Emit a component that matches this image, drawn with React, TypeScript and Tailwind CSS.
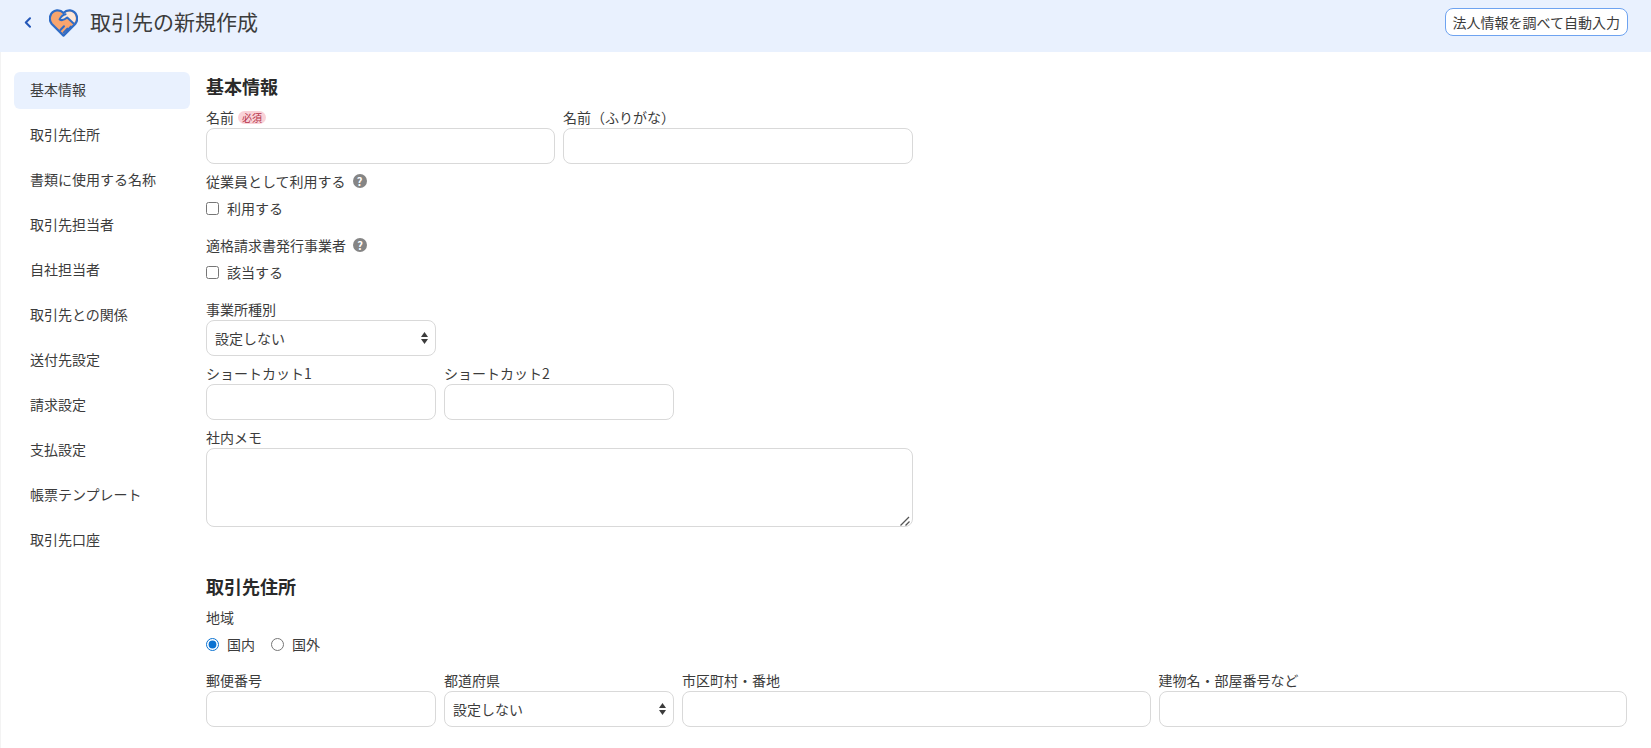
const sections = [
  "基本情報",
  "取引先住所",
  "書類に使用する名称",
  "取引先担当者",
  "自社担当者",
  "取引先との関係",
  "送付先設定",
  "請求設定",
  "支払設定",
  "帳票テンプレート",
  "取引先口座",
];

const inputClass =
  "block h-9 w-full rounded-lg border border-[#d9d9d9] bg-white px-2 text-sm outline-none";

function Logo() {
  return (
    <svg width="29" height="28" viewBox="0 0 29 28" fill="none">
      <path
        d="M14.5 26.6 L2.8 15 C-1 10.6 1 2.2 7.8 1.4 C10.8 1.1 13 2.3 14.5 4 C16 2.3 18.2 1.1 21.2 1.4 C28 2.2 30 10.6 26.2 15 Z"
        fill="#f8a56e"
      />
      <path
        d="M10 10.5 C12 5 16.5 2.4 21 2.4 C25.5 2.8 27.8 7.5 26.4 12 L24.4 14.5 L18.4 8.8 L13.5 11.6 Z"
        fill="#fde6d6"
      />
      <path
        d="M24.6 14.6 L18.2 8.6 C15.8 10.6 13.4 12.4 10.6 10.4 C12.2 7 14 5.6 16.6 5.2"
        stroke="#2f6cc6"
        strokeWidth="2"
        strokeLinecap="round"
        strokeLinejoin="round"
      />
      <path
        d="M11.4 21 L15 17.2 M14.6 23.6 L18.4 19.6 M18 21.8 L21.8 17.6"
        stroke="#2f6cc6"
        strokeWidth="2"
        strokeLinecap="round"
      />
      <path
        d="M14.5 26.6 L2.8 15 C-1 10.6 1 2.2 7.8 1.4 C10.8 1.1 13 2.3 14.5 4 C16 2.3 18.2 1.1 21.2 1.4 C28 2.2 30 10.6 26.2 15 Z"
        stroke="#2f6cc6"
        strokeWidth="2.2"
        strokeLinejoin="round"
      />
    </svg>
  );
}

function HelpIcon() {
  return (
    <span className="ml-[7px] flex h-[14px] w-[14px] items-center justify-center rounded-full bg-[#858585] text-[11px] leading-none font-bold text-white">
      ?
    </span>
  );
}

function Label({ children }: { children: React.ReactNode }) {
  return <div className="flex h-[22px] items-center text-sm text-[#3c3c3c]">{children}</div>;
}

function Field({
  label,
  className,
  children,
}: {
  label: React.ReactNode;
  className?: string;
  children?: React.ReactNode;
}) {
  return (
    <div className={className}>
      <Label>{label}</Label>
      {children ?? <input type="text" className={inputClass} />}
    </div>
  );
}

function SelectBox() {
  return (
    <div className="relative">
      <select className="block h-9 w-full appearance-none rounded-lg border border-[#d9d9d9] bg-white px-2 text-sm text-[#3c3c3c] outline-none">
        <option>設定しない</option>
      </select>
      <svg
        className="pointer-events-none absolute top-[12px] right-[8px]"
        width="7"
        height="12"
        viewBox="0 0 7 12"
        fill="#3c3c3c"
      >
        <path d="M3.5 0 L7 5 H0 Z" />
        <path d="M3.5 12 L7 7 H0 Z" />
      </svg>
    </div>
  );
}

export default function App() {
  return (
    <div
      className="h-[748px] overflow-hidden bg-white text-[#3c3c3c]"
      style={{ fontFamily: '"Noto Sans CJK JP", "Noto Sans", sans-serif' }}
    >
      <header className="flex h-[52px] items-start justify-between bg-[#e9f1fe] pt-2 pr-[23px] pl-[24px]">
        <div className="flex h-7 items-center">
          <svg width="8" height="11" viewBox="0 0 8 11" fill="none">
            <path
              d="M6 1.2 L1.8 5.5 L6 9.8"
              stroke="#2457b8"
              strokeWidth="2"
              strokeLinecap="round"
              strokeLinejoin="round"
            />
          </svg>
          <div className="mt-[2px] ml-[17px]">
            <Logo />
          </div>
          <h1 className="ml-[12px] text-[21px] font-normal text-[#3c3c3c]">取引先の新規作成</h1>
        </div>
        <button className="h-7 rounded-lg border border-[#6ea3f0] bg-white px-[7px] text-sm text-[#3c3c3c]">
          法人情報を調べて自動入力
        </button>
      </header>

      <div className="flex h-[696px] border-l border-[#f3f3f3]">
        <nav className="w-[205px] shrink-0 pt-5 pr-4 pl-[13px]">
          {sections.map((s, i) => (
            <div
              key={s}
              className={`mb-2 flex h-[37px] items-center rounded-md pb-1 pl-4 text-sm ${
                i === 0 ? "bg-[#e9f1fe]" : ""
              }`}
            >
              {s}
            </div>
          ))}
        </nav>

        <main className="flex-1 pt-[21px] pr-6">
          <h2 className="text-lg leading-[26px] font-bold text-[#2a2a2a]">基本情報</h2>
          <div className="w-[707px]">
            <div className="mt-[7px] grid grid-cols-[349px_350px] gap-2">
              <Field
                label={
                  <>
                    名前
                    <span className="ml-1 rounded-full bg-[#f9d2d8] px-1 text-[10px] leading-[13px] text-[#b5334a]">
                      必須
                    </span>
                  </>
                }
              />
              <Field label="名前（ふりがな）" />
            </div>
            <div className="mt-[6px]">
              <Label>
                従業員として利用する
                <HelpIcon />
              </Label>
              <label className="mt-1 flex h-6 items-center text-sm">
                <input type="checkbox" className="mr-2 h-[13px] w-[13px]" />
                利用する
              </label>
            </div>
            <div className="mt-[14px]">
              <Label>
                適格請求書発行事業者
                <HelpIcon />
              </Label>
              <label className="mt-1 flex h-6 items-center text-sm">
                <input type="checkbox" className="mr-2 h-[13px] w-[13px]" />
                該当する
              </label>
            </div>
            <Field label="事業所種別" className="mt-[14px] w-[230px]">
              <SelectBox />
            </Field>
            <div className="mt-[6px] flex gap-2">
              <Field label="ショートカット1" className="w-[230px]" />
              <Field label="ショートカット2" className="w-[230px]" />
            </div>
            <Field label="社内メモ" className="mt-[6px]">
              <div className="relative">
                <textarea className="block h-[79px] w-full resize-none rounded-lg border border-[#d9d9d9] bg-white px-2 text-sm outline-none" />
                <svg
                  className="pointer-events-none absolute right-[3px] bottom-[1px]"
                  width="10"
                  height="10"
                  viewBox="0 0 10 10"
                  stroke="#555555"
                  strokeWidth="1.3"
                >
                  <path d="M0.5 9.5 L9 1" />
                  <path d="M5.5 9.5 L9.5 5.5" />
                </svg>
              </div>
            </Field>
          </div>

          <h2 className="mt-[46px] text-lg leading-[26px] font-bold text-[#2a2a2a]">取引先住所</h2>
          <Field label="地域" className="mt-[7px]">
            <div className="mt-1 flex h-6 items-center text-sm">
              <input
                type="radio"
                name="region"
                defaultChecked
                className="mr-2 h-[13px] w-[13px] accent-[#0b72d1]"
              />
              国内
              <input
                type="radio"
                name="region"
                className="mr-2 ml-4 h-[13px] w-[13px] accent-[#0b72d1]"
              />
              国外
            </div>
          </Field>
          <div className="mt-[13px] flex gap-2">
            <Field label="郵便番号" className="w-[230px]" />
            <Field label="都道府県" className="w-[230px]">
              <SelectBox />
            </Field>
            <Field label="市区町村・番地" className="flex-1" />
            <Field label="建物名・部屋番号など" className="flex-1" />
          </div>
        </main>
      </div>
    </div>
  );
}
